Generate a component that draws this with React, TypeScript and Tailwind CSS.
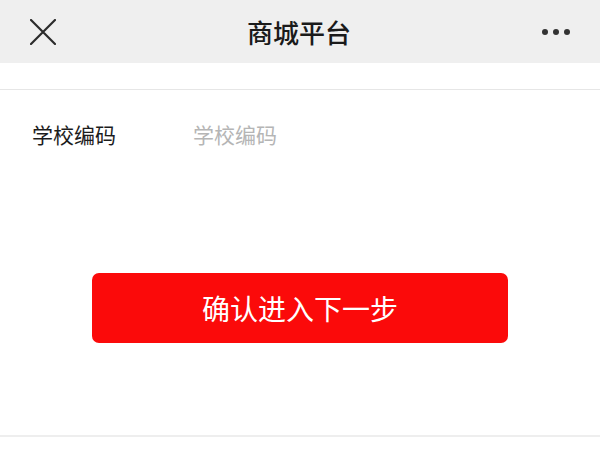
export default function App() {
    return (
        <div
            className="flex h-[472px] w-[600px] flex-col bg-white"
            style={{ fontFamily: '"Noto Sans CJK SC", "Noto Sans", sans-serif' }}
        >
            {/* Top bar */}
            <div className="flex h-[63px] items-center justify-between bg-[#efefef] pl-[30px] pr-[28px]">
                <svg width="26" height="26" viewBox="0 0 26 26" className="text-[#2b2b2b]">
                    <path d="M1 1 L25 25 M25 1 L1 25" stroke="currentColor" strokeWidth="2.2" strokeLinecap="round" />
                </svg>
                <h1 className="text-[26px] font-medium text-[#1a1a1a]">商城平台</h1>
                <div className="flex w-[30px] items-center justify-end gap-[5px] pr-[2px]">
                    <span className="h-[6px] w-[6px] rounded-full bg-[#333]" />
                    <span className="h-[6px] w-[6px] rounded-full bg-[#333]" />
                    <span className="h-[6px] w-[6px] rounded-full bg-[#333]" />
                </div>
            </div>

            <div className="h-[26px]" />
            <div className="h-px bg-[#e6e6e6]" />

            {/* Form row */}
            <div className="flex h-[90px] items-center px-[32px]">
                <span className="w-[161px] text-[21px] text-[#1c1c1c]">学校编码</span>
                <span className="text-[21px] text-[#b5b5b5]">学校编码</span>
            </div>

            <div className="flex justify-center pt-[93px]">
                <button
                    type="button"
                    className="flex h-[70px] w-[416px] items-center justify-center rounded-[7px] bg-[#fb0a0a] text-[28px] text-white"
                >
                    确认进入下一步
                </button>
            </div>

            <div className="h-[92px]" />
            <div className="h-[2px] bg-[#eeeeee]" />
        </div>
    )
}
